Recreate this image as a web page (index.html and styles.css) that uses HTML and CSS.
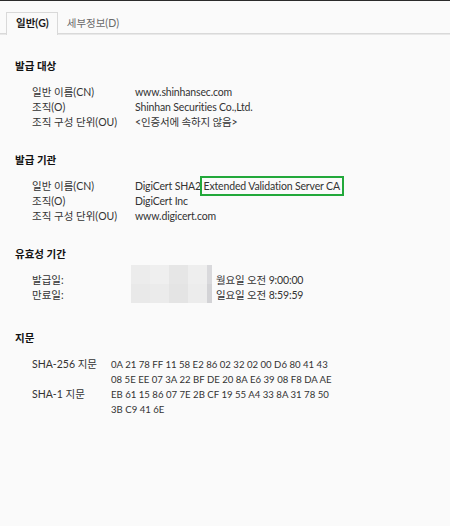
FILE: index.html
```html
<!DOCTYPE html>
<html lang="ko">
<head>
<meta charset="utf-8">
<link rel="stylesheet" href="styles.css">
</head>
<body>
<div class="window">
  <div class="tabs">
    <div class="tab active">일반(G)</div>
    <div class="tab">세부정보(D)</div>
  </div>
  <div class="content">
    <section class="section">
      <h2 class="title">발급 대상</h2>
      <div class="rows">
        <div class="label">일반 이름(CN)</div><div class="value">www.shinhansec.com</div>
        <div class="label">조직(O)</div><div class="value">Shinhan Securities Co.,Ltd.</div>
        <div class="label">조직 구성 단위(OU)</div><div class="value">&lt;인증서에 속하지 않음&gt;</div>
      </div>
    </section>
    <section class="section">
      <h2 class="title">발급 기관</h2>
      <div class="rows">
        <div class="label">일반 이름(CN)</div><div class="value">DigiCert SHA2 <span class="hl">Extended Validation Server CA</span></div>
        <div class="label">조직(O)</div><div class="value">DigiCert Inc</div>
        <div class="label">조직 구성 단위(OU)</div><div class="value">www.digicert.com</div>
      </div>
    </section>
    <section class="section validity-section">
      <h2 class="title">유효성 기간</h2>
      <div class="validity">
        <div class="label">발급일:</div>
        <div class="blur">
          <span class="c1"></span><span class="c2"></span><span class="c3"></span><span class="c4"></span><span class="c5"></span>
          <span class="c6"></span><span class="c7"></span><span class="c8"></span><span class="c9"></span><span class="c10"></span>
        </div>
        <div class="value">월요일 오전 9:00:00</div>
        <div class="label">만료일:</div>
        <div class="value">일요일 오전 8:59:59</div>
      </div>
    </section>
    <section class="section">
      <h2 class="title">지문</h2>
      <div class="rows fp">
        <div class="label">SHA-256 지문</div><div class="value hex">0A 21 78 FF 11 58 E2 86 02 32 02 00 D6 80 41 43<br>08 5E EE 07 3A 22 BF DE 20 8A E6 39 08 F8 DA AE</div>
        <div class="label">SHA-1 지문</div><div class="value hex">EB 61 15 86 07 7E 2B CF 19 55 A4 33 8A 31 78 50<br>3B C9 41 6E</div>
      </div>
    </section>
  </div>
</div>
</body>
</html>
```
FILE: styles.css
```css
html, body {
  margin: 0;
  padding: 0;
  background: #fafafa;
}
body {
  font-family: "Lato", "Noto Sans CJK KR", "Noto Sans", sans-serif;
  font-size: 10.5px;
  line-height: 15px;
  color: #333;
}
.window {
  border-top: 1px solid #2b2b2b;
  height: 525px;
  background: #fafafa;
}
.tabs {
  display: flex;
  padding: 11px 0 0 6px;
  border-bottom: 1px solid #d9d9d9;
  box-shadow: 0 1px 0 #e8e8e8;
  height: 21px;
}
.tab {
  height: 21px;
  line-height: 21px;
  padding: 0 8px;
  color: #6a6a6a;
  border: 1px solid transparent;
  border-bottom: none;
}
.tab.active {
  color: #1a1a1a;
  font-weight: bold;
  border-color: #d9d9d9;
  background: #fafafa;
  height: 22px;
  margin-bottom: -1px;
  padding: 0 8px 0 9px;
  position: relative;
}
.content {
  padding: 25px 0 0 15px;
}
.section {
  margin-bottom: 23px;
}
.validity-section {
  margin-bottom: 28px;
}
.title {
  margin: 0 0 11px 0;
  font-size: 10.5px;
  font-weight: 600;
  color: #111;
  line-height: 15px;
}
.rows {
  display: grid;
  grid-template-columns: 103px auto;
  grid-auto-rows: 15px;
  padding-left: 17px;
}
.rows.fp {
  grid-template-columns: 79px auto;
  grid-auto-rows: auto;
}
.label, .value {
  white-space: nowrap;
}
.value {
  letter-spacing: -0.15px;
}
.hex {
  font-size: 9.6px;
  letter-spacing: 0;
}
.hl {
  outline: 2px solid #22a83a;
  outline-offset: 2px;
}
.validity {
  display: grid;
  grid-template-columns: 99px 85px auto;
  grid-auto-rows: 15px;
  padding-left: 17px;
}
.validity .blur {
  grid-row: 1 / span 2;
  grid-column: 2;
  margin-top: -8px;
  width: 81px;
  height: 38px;
  display: grid;
  grid-template-columns: 19px 19px 19px 19px 5px;
  grid-template-rows: 19px 19px;
}
.blur span { display: block; }
.c1 { background: #ececec; }
.c2 { background: #efefef; }
.c3 { background: #e6e6e6; }
.c4 { background: #eeeeee; }
.c5 { background: #d9d9dc; }
.c6 { background: #e9e9e9; }
.c7 { background: #ebebeb; }
.c8 { background: #e4e4e4; }
.c9 { background: #ececec; }
.c10 { background: #d3d3d6; }
.validity .value { grid-column: 3; }
```
